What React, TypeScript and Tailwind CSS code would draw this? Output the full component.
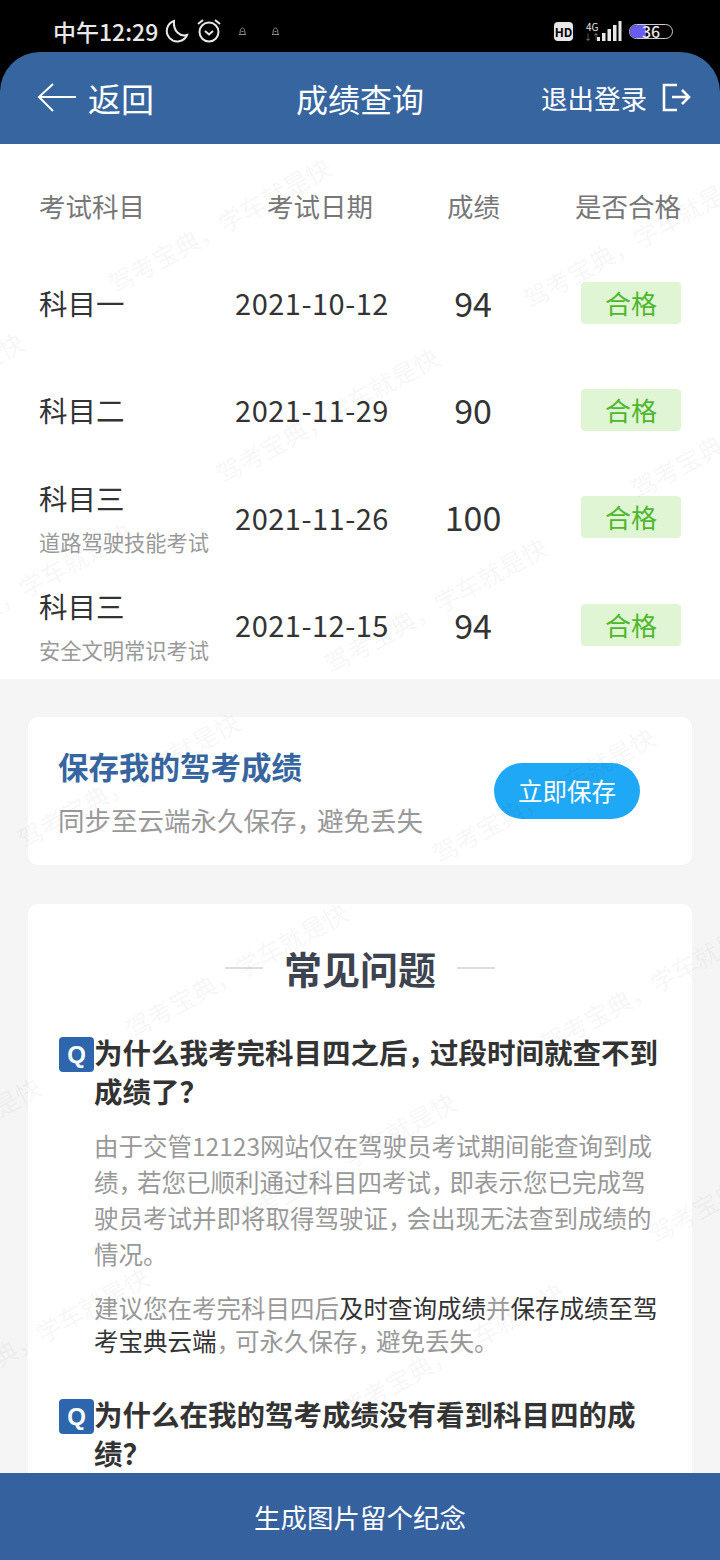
import React from "react";

const font = { fontFamily: '"Noto Sans CJK SC", "Noto Sans", sans-serif' };

const rows = [
  { name: "科目一", date: "2021-10-12", score: "94" },
  { name: "科目二", date: "2021-11-29", score: "90" },
  { name: "科目三", sub: "道路驾驶技能考试", date: "2021-11-26", score: "100" },
  { name: "科目三", sub: "安全文明常识考试", date: "2021-12-15", score: "94" },
];

// watermark lattice, anchored on the start of each text
const marks: { x: number; y: number }[] = [];
for (let i = -2; i < 9; i++) {
  for (let j = -3; j < 4; j++) {
    const x = 117 + i * 108 + j * 415;
    const y = 298 + i * 190 + j * 15;
    if (x > -260 && x < 720 && y > 150 && y < 1500) marks.push({ x, y });
  }
}

function Watermark() {
  return (
    <div className="absolute inset-0 overflow-hidden pointer-events-none z-10">
      {marks.map((m, i) => (
        <div
          key={i}
          className="absolute origin-bottom-left whitespace-nowrap text-[25px] leading-[30px] text-black/[0.055]"
          style={{ left: m.x, top: m.y - 30, transform: "rotate(-29deg)" }}>
          驾考宝典，学车就是快
        </div>
      ))}
    </div>
  );
}

function Comma() {
  return <span className="mr-[-6px]">，</span>;
}

function TinyBell({ className }: { className: string }) {
  return (
    <svg width="9" height="9" viewBox="0 0 9 9" className={className} fill="none" stroke="#8a8a8a" strokeWidth="1">
      <path d="M1 7.5h7M2 7.5C2 4 2.5 1 4.5 1S7 4 7 7.5M3.5 4.5h2" />
    </svg>
  );
}

function StatusBar() {
  return (
    <div className="h-[52px] bg-black flex items-center justify-between pl-[53px] pr-[47px] pt-[10px] text-[#e8e8e8]">
      <div className="flex items-center">
        <span className="text-[23px] font-medium leading-none w-[102px] whitespace-nowrap">中午12:29</span>
        <svg width="26" height="26" viewBox="0 0 26 26" className="ml-[9px]" fill="none" stroke="#e8e8e8" strokeWidth="2">
          <path d="M10 3a10.5 10.5 0 1 0 13 14c-7 2-14-4-13-14z" />
        </svg>
        <svg width="26" height="26" viewBox="0 0 26 26" className="ml-[6px]" fill="none" stroke="#e8e8e8" strokeWidth="2">
          <circle cx="13" cy="14" r="9.5" />
          <path d="M9 13l4 3.5 4-3.5M2 6l5-4M24 6l-5-4" />
        </svg>
        <TinyBell className="ml-[16px]" />
        <TinyBell className="ml-[24px]" />
      </div>
      <div className="flex items-center">
        <span className="w-[19px] h-[19px] rounded-[4px] bg-[#e8e8e8] text-black text-[12px] font-bold leading-[19px] text-center">HD</span>
        <span className="ml-[11px] flex flex-col text-[10px] leading-[11px] w-[12px]">
          <span className="ml-[2px]">4G</span>
          <span className="text-[8px] leading-[9px] text-[#888]">↓↑</span>
        </span>
        <svg width="26" height="20" viewBox="0 0 26 20" fill="#e8e8e8">
          <rect x="1" y="16" width="3" height="4" />
          <rect x="6" y="12" width="3.5" height="8" />
          <rect x="11.5" y="8" width="3.5" height="12" />
          <rect x="17" y="4" width="3.5" height="16" />
          <rect x="22.5" y="0" width="3" height="20" />
        </svg>
        <div className="relative ml-[7px] w-[44px] h-[15px] rounded-full border border-[#ccc] overflow-hidden text-center text-[16px] font-medium leading-[12px]">
          <div className="absolute left-0 top-0 bottom-0 w-[16px] bg-[#6a5cf0]" />
          <span className="relative">36</span>
        </div>
      </div>
    </div>
  );
}

function Header() {
  return (
    <div className="bg-black">
      <div className="h-[92px] bg-[#36659f] rounded-t-[40px] flex items-center justify-between pl-[37px] pr-[29px] text-white relative">
        <div className="flex items-center">
          <svg width="40" height="30" viewBox="0 0 40 30" fill="none" stroke="white" strokeWidth="2">
            <path d="M39 14H3M16 1L2 14l14 14" />
          </svg>
          <span className="ml-[11px] text-[33px] leading-none">返回</span>
        </div>
        <span className="absolute left-0 right-0 text-center text-[32px] leading-none">成绩查询</span>
        <div className="flex items-center">
          <span className="text-[26.5px] leading-none">退出登录</span>
          <svg width="30" height="30" viewBox="0 0 30 30" className="ml-[14px]" fill="none" stroke="white" strokeWidth="2.6">
            <path d="M16 2H3v25h13M11 14h17M21 7l7 7-7 7" />
          </svg>
        </div>
      </div>
    </div>
  );
}

function ScoreTable() {
  return (
    <div className="bg-white h-[535px] pl-[39px]">
      <div className="h-[105px] flex items-center text-[26.5px] leading-none text-[#777] pt-[19px]">
        <span className="w-[228px]">考试科目</span>
        <span className="w-[180px]">考试日期</span>
        <span className="w-[128px]">成绩</span>
        <span>是否合格</span>
      </div>
      {rows.map((r, i) => (
        <div key={i} className="h-[107.3px] flex items-center">
          <div className="w-[196px]">
            <div className="text-[28.5px] leading-[36px] text-[#333]">{r.name}</div>
            {r.sub && <div className="text-[21.25px] leading-[24px] mt-[14px] text-[#999]">{r.sub}</div>}
          </div>
          <div className="w-[154px] text-[29px] tracking-[0.5px] leading-none text-[#333] text-center whitespace-nowrap">{r.date}</div>
          <div className="w-[168px] text-[34px] leading-none text-[#333] text-center">{r.score}</div>
          <div className="ml-[24px] w-[100px] h-[42px] rounded-[4px] bg-[#dff5d3] text-[#4db82c] text-[26px] leading-[42px] text-center">合格</div>
        </div>
      ))}
    </div>
  );
}

function SaveCard() {
  return (
    <div className="mt-[38px] mx-[28px] h-[148px] bg-white rounded-[10px] flex items-center justify-between pl-[30px] pr-[52px]">
      <div>
        <div className="text-[30.5px] leading-[36px] font-bold text-[#36659f]">保存我的驾考成绩</div>
        <div className="mt-[21px] text-[26.5px] leading-[30px] text-[#999]">同步至云端永久保存<Comma />避免丢失</div>
      </div>
      <div className="w-[146px] h-[56px] rounded-full bg-[#1fa8f5] text-white text-[24.5px] leading-[56px] text-center">立即保存</div>
    </div>
  );
}

function Question({ children }: { children: React.ReactNode }) {
  return (
    <div className="flex">
      <span
        className="mt-[4px] shrink-0 w-[35px] h-[35px] rounded-[4px] bg-[#2d66ad] text-white text-[24px] leading-[35px] font-bold text-center"
        style={{ fontFamily: '"Liberation Sans", sans-serif' }}>
        Q
      </span>
      <div className="text-[28.5px] leading-[38.5px] font-bold text-[#333]">{children}</div>
    </div>
  );
}

function Faq() {
  return (
    <div className="mt-[39px] mx-[28px] flex-1 bg-white rounded-t-[10px] pl-[31px] pr-[29px] pt-[38px] overflow-hidden">
      <div className="flex items-center justify-center pr-[2px]">
        <span className="w-[38px] h-[2px] bg-[#ddd]" />
        <span className="mx-[21px] text-[38px] leading-[52px] font-bold text-[#3d4450]">常见问题</span>
        <span className="w-[38px] h-[2px] bg-[#ddd]" />
      </div>
      <div className="mt-[39px]">
        <Question>为什么我考完科目四之后<Comma />过段时间就查不到成绩了？</Question>
      </div>
      <div className="ml-[35px] mt-[18px] text-[24.5px] leading-[36px] text-[#999]">
        <p>由于交管12123网站仅在驾驶员考试期间能查询到成绩<Comma />若您已顺利通过科目四考试<Comma />即表示您已完成驾驶员考试并即将取得驾驶证<Comma />会出现无法查到成绩的情况。</p>
        <p className="mt-[19px] leading-[33px]">
          建议您在考完科目四后<span className="text-[#333]">及时查询成绩</span>并<span className="text-[#333]">保存成绩至驾考宝典云端</span><Comma />可永久保存<Comma />避免丢失。
        </p>
      </div>
      <div className="mt-[38px]">
        <Question>为什么在我的驾考成绩没有看到科目四的成绩？</Question>
      </div>
    </div>
  );
}

export default function App() {
  return (
    <div className="relative w-[720px] h-[1560px] overflow-hidden flex flex-col bg-[#f5f5f6]" style={font}>
      <StatusBar />
      <Header />
      <ScoreTable />
      <SaveCard />
      <Faq />
      <div className="relative z-20 h-[87px] shrink-0 bg-[#36619f] text-white text-[26.5px] leading-[87px] text-center">生成图片留个纪念</div>
      <Watermark />
    </div>
  );
}
